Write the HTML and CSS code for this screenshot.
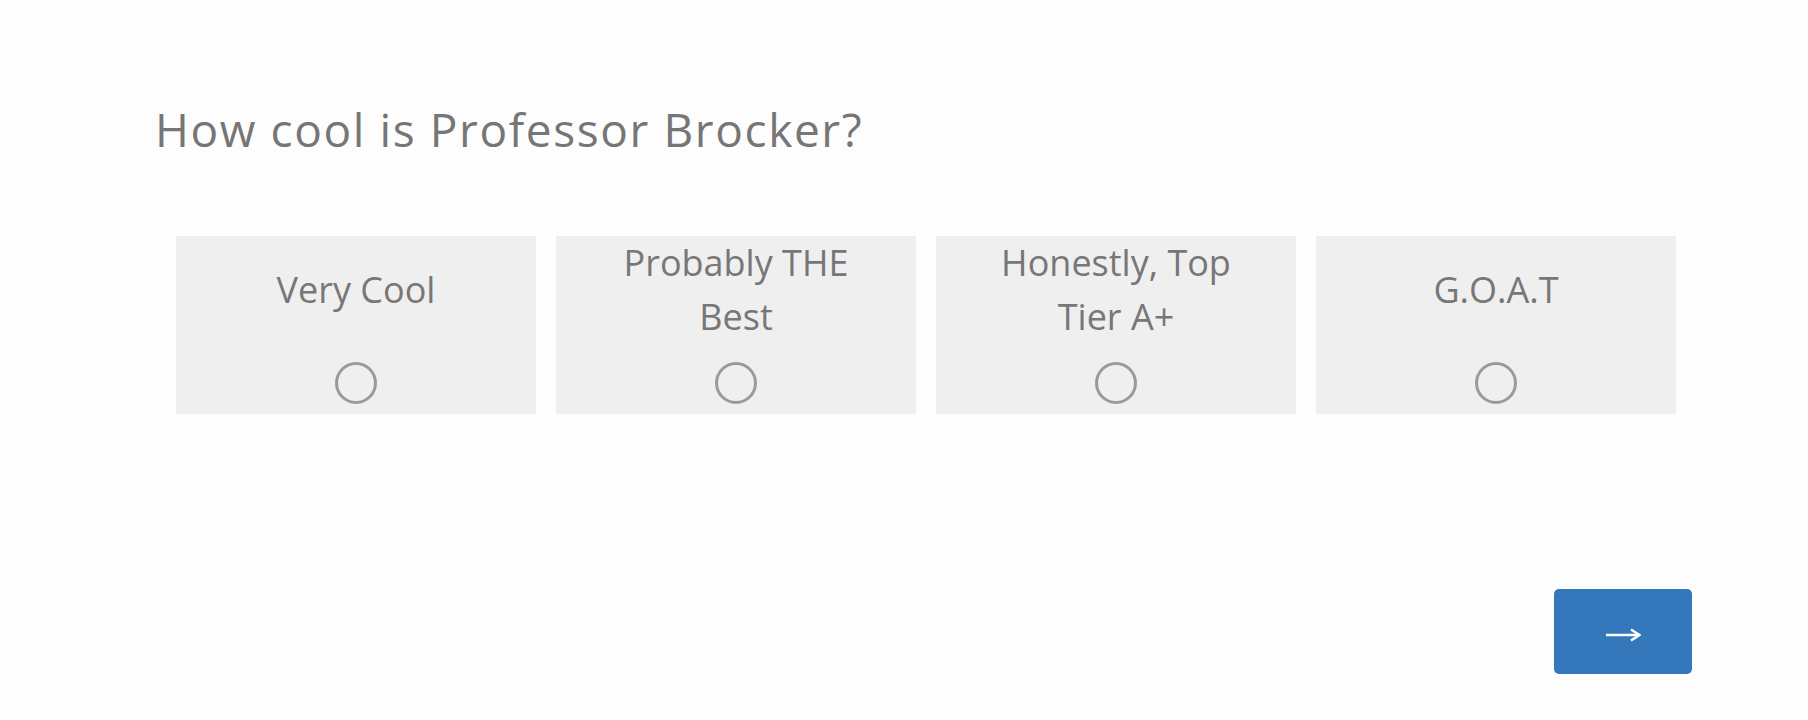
FILE: index.html
```html
<!DOCTYPE html>
<html lang="en">
<head>
<meta charset="utf-8">
<title>Survey</title>
<link rel="stylesheet" href="styles.css">
</head>
<body>
<main class="survey">
  <h1 class="question">How cool is Professor Brocker?</h1>
  <div class="choices">
    <label class="choice">
      <span class="choice-text">Very Cool</span>
      <span class="radio"></span>
    </label>
    <label class="choice">
      <span class="choice-text">Probably THE Best</span>
      <span class="radio"></span>
    </label>
    <label class="choice">
      <span class="choice-text">Honestly, Top Tier A+</span>
      <span class="radio"></span>
    </label>
    <label class="choice">
      <span class="choice-text">G.O.A.T</span>
      <span class="radio"></span>
    </label>
  </div>
  <div class="nav">
    <button class="next" type="button" aria-label="Next">
      <svg class="arrow" width="36" height="14" viewBox="0 0 36 14">
        <path d="M1 7H34" stroke="#fff" stroke-width="2.6" fill="none"/>
        <path d="M26 1.5L34.5 7L26 12.5" stroke="#fff" stroke-width="2.6" fill="none" stroke-linejoin="miter"/>
      </svg>
    </button>
  </div>
</main>
</body>
</html>
```
FILE: styles.css
```css
html, body {
  margin: 0;
  padding: 0;
  background: #fdfdfd;
}

body {
  font-family: "Open Sans", "Noto Sans", sans-serif;
  color: #767676;
}

.survey {
  padding: 101px 116px 0 155px;
}

.question {
  margin: 0;
  font-size: 46px;
  font-weight: 400;
  line-height: 56px;
  letter-spacing: 1.6px;
  color: #767676;
}

.choices {
  margin-top: 79px;
  padding-left: 21px;
  display: grid;
  grid-template-columns: repeat(4, 360px);
  column-gap: 20px;
}

.choice {
  background: #efefef;
  height: 178px;
  display: flex;
  flex-direction: column;
  align-items: center;
  box-sizing: border-box;
}

.choice-text {
  height: 108px;
  display: flex;
  align-items: center;
  justify-content: center;
  text-align: center;
  font-size: 36px;
  line-height: 54px;
  color: #777;
  padding: 0 60px;
}

.radio {
  margin-top: 18px;
  width: 42px;
  height: 42px;
  box-sizing: border-box;
  border: 3px solid #9a9a9a;
  border-radius: 50%;
}

.nav {
  display: flex;
  justify-content: flex-end;
  margin-top: 175px;
}

.next {
  width: 138px;
  height: 85px;
  border: none;
  border-radius: 5px;
  background: #3477bb;
  display: flex;
  align-items: center;
  justify-content: center;
  padding: 7px 0 0 0;
  cursor: pointer;
}

.arrow {
  display: block;
}
```
